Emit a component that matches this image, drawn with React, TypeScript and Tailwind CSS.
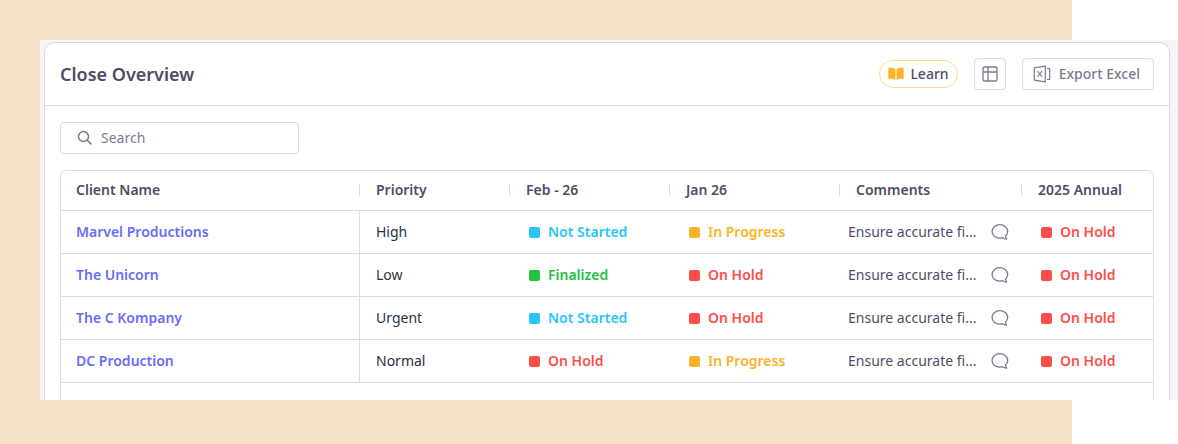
const statusStyles = {
  'Not Started': { text: 'text-[#29c5fb]', dot: 'bg-[#29c5fb]' },
  'In Progress': { text: 'text-[#fcb329]', dot: 'bg-[#fcb329]' },
  'On Hold': { text: 'text-[#ff4d4a]', dot: 'bg-[#ff4d4a]' },
  Finalized: { text: 'text-[#24c141]', dot: 'bg-[#24c141]' },
}

type StatusName = keyof typeof statusStyles

type Client = {
  name: string
  priority: string
  feb: StatusName
  jan: StatusName
  annual: StatusName
}

const clients: Client[] = [
  { name: 'Marvel Productions', priority: 'High', feb: 'Not Started', jan: 'In Progress', annual: 'On Hold' },
  { name: 'The Unicorn', priority: 'Low', feb: 'Finalized', jan: 'On Hold', annual: 'On Hold' },
  { name: 'The C Kompany', priority: 'Urgent', feb: 'Not Started', jan: 'On Hold', annual: 'On Hold' },
  { name: 'DC Production', priority: 'Normal', feb: 'On Hold', jan: 'In Progress', annual: 'On Hold' },
]

const columns = [
  { label: 'Client Name', width: 'w-[299px]' },
  { label: 'Priority', width: 'w-[150px]' },
  { label: 'Feb - 26', width: 'w-[160px]' },
  { label: 'Jan 26', width: 'w-[170px]' },
  { label: 'Comments', width: 'w-[182px]' },
  { label: '2025 Annual', width: '' },
]

function BookIcon() {
  return (
    <svg width="16" height="14" viewBox="0 0 16 14" fill="#fcb329" aria-hidden="true">
      <path d="M7.5 1.9C5.6.8 3 .5.9 1c-.4.1-.6.3-.6.7v9.5c0 .5.4.8.9.7 2-.4 4.4-.1 6.3 1.1z" />
      <path d="M8.5 1.9C10.4.8 13 .5 15.1 1c.4.1.6.3.6.7v9.5c0 .5-.4.8-.9.7-2-.4-4.4-.1-6.3 1.1z" />
    </svg>
  )
}

function LayoutIcon() {
  return (
    <svg width="16" height="16" viewBox="0 0 16 16" fill="none" stroke="#7c7a90" strokeWidth="1.3" aria-hidden="true">
      <rect x="1" y="1" width="14" height="14" rx="1.5" />
      <path d="M1 6h14M6 1v14" />
    </svg>
  )
}

function ExcelIcon() {
  return (
    <svg width="18" height="18" viewBox="0 0 18 18" fill="none" stroke="#7c7a90" strokeWidth="1.2" strokeLinejoin="round" aria-hidden="true">
      <path d="M1.3 2.9 12.3 1.2v15.6L1.3 15.2z" />
      <path d="m4.6 6 4.4 6M9 6l-4.400 6" />
      <path d="M14 3.5h2.700v11H14" />
    </svg>
  )
}

function SearchIcon() {
  return (
    <svg className="pointer-events-none absolute left-[17px] top-2" width="16" height="16" viewBox="0 0 16 16" fill="none" stroke="#7c7a90" strokeWidth="1.5" strokeLinecap="round" aria-hidden="true">
      <circle cx="6.5" cy="6.5" r="5" />
      <path d="m10.2 10.2 3.800 3.700" />
    </svg>
  )
}

function CommentIcon() {
  return (
    <svg width="18" height="16" viewBox="0 0 18 16" fill="none" stroke="#7c7a90" strokeWidth="1.3" strokeLinejoin="round" aria-hidden="true">
      <path d="M8.9.7C4.4.7 1.1 3.6 1.1 7.5s3.2 6.6 7.6 6.6c1 0 1.900-.1 2.800-.4 1.200.9 2.700 1.400 4.200 1.300-.8-.8-1.200-1.800-1.300-2.900 1.500-1.200 2.300-2.800 2.300-4.600C16.700 3.600 13.400.7 8.900.7z" />
    </svg>
  )
}

function Status({ name }: { name: StatusName }) {
  return (
    <span className={`flex items-center gap-2 font-semibold ${statusStyles[name].text}`}>
      <span className={`h-[11px] w-[11px] rounded-xs ${statusStyles[name].dot}`} />
      {name}
    </span>
  )
}

export default function App() {
  return (
    <div className="relative bg-white pt-10 pb-11 pl-10 font-['Noto_Sans',sans-serif] text-sm text-[#4e4d66]">
      <div className="absolute inset-y-0 left-0 right-[106px] bg-[#f7e4ca]" />

      <main className="relative bg-[#f6f6fa] pl-1 pr-2 pt-0.5">
        <section className="rounded-t-[10px] border border-b-0 border-[#d9d9de] bg-white">
          <header className="flex items-center justify-between border-b border-[#d9d9de] px-[15px] py-[15px]">
            <h1 className="text-lg font-semibold">Close Overview</h1>
            <div className="flex items-center gap-4">
              <button className="flex h-7 items-center gap-1.5 rounded-full border border-[#fcdb94] px-2 font-medium">
                <BookIcon />
                Learn
              </button>
              <button
                className="flex h-8 w-8 items-center justify-center rounded-sm border border-[#d9d9de]"
                aria-label="Table layout"
              >
                <LayoutIcon />
              </button>
              <button className="flex h-8 items-center gap-2 rounded-sm border border-[#d9d9de] pl-2.5 pr-[13px] font-medium text-[#7c7a90]">
                <ExcelIcon />
                Export Excel
              </button>
            </div>
          </header>

          <div className="px-[15px] pt-4">
            <div className="relative w-[239px]">
              <SearchIcon />
              <input
                type="search"
                aria-label="Search"
                placeholder="Search"
                className="block h-8 w-full rounded-sm border border-[#d9d9de] pb-0.5 pl-10 pr-3 placeholder:text-[#7c7a90]"
              />
            </div>

            <div className="mt-4 rounded-t-md border border-b-0 border-[#dedede] pb-[17px]">
              <table className="w-full table-fixed border-separate border-spacing-0 text-left">
                <thead>
                  <tr className="h-10">
                    {columns.map((col, i) => (
                      <th key={col.label} className={`border-b border-[#dedede] p-0 pb-0.5 font-semibold ${col.width}`}>
                        <div
                          className={`flex h-3 items-center ${i > 0 ? 'pl-4' : 'pl-[15px]'} ${
                            i < columns.length - 1 ? 'border-r border-[#dedede]' : ''
                          }`}
                        >
                          {col.label}
                        </div>
                      </th>
                    ))}
                  </tr>
                </thead>
                <tbody>
                  {clients.map((client) => (
                    <tr key={client.name} className="h-[43px]">
                      <td className="border-b border-r border-[#dedede] py-0 pl-[15px]">
                        <a href="#" className="font-semibold text-[#6b6bfa]">
                          {client.name}
                        </a>
                      </td>
                      <td className="border-b border-[#dedede] py-0 pl-4 text-[#293241]">{client.priority}</td>
                      <td className="border-b border-[#dedede] py-0 pl-[19px]">
                        <Status name={client.feb} />
                      </td>
                      <td className="border-b border-[#dedede] py-0 pl-[19px]">
                        <Status name={client.jan} />
                      </td>
                      <td className="border-b border-[#dedede] py-0 pl-2 pr-[13px]">
                        <div className="flex items-center justify-between">
                          Ensure accurate fi...
                          <button aria-label={`Comments for ${client.name}`}>
                            <CommentIcon />
                          </button>
                        </div>
                      </td>
                      <td className="border-b border-[#dedede] py-0 pl-[19px]">
                        <Status name={client.annual} />
                      </td>
                    </tr>
                  ))}
                </tbody>
              </table>
            </div>
          </div>
        </section>
      </main>
    </div>
  )
}
